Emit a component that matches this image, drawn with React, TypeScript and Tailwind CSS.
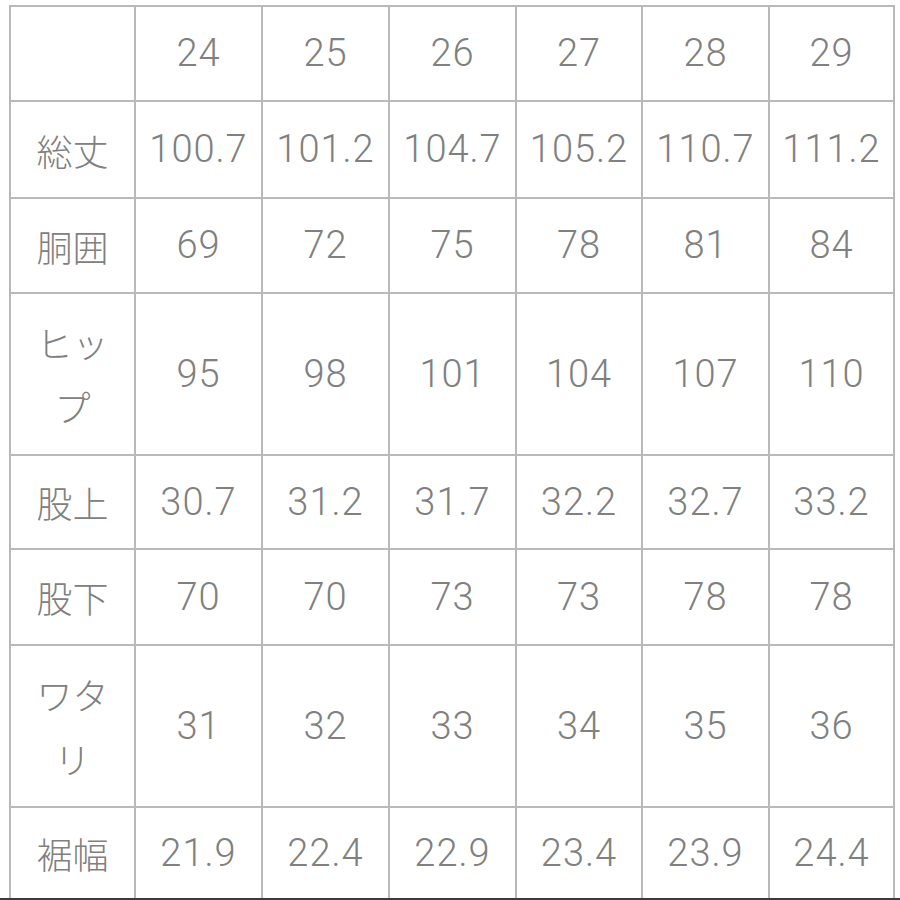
const sizes = ["24", "25", "26", "27", "28", "29"];

const rows: { label: React.ReactNode; values: string[] }[] = [
  { label: "総丈", values: ["100.7", "101.2", "104.7", "105.2", "110.7", "111.2"] },
  { label: "胴囲", values: ["69", "72", "75", "78", "81", "84"] },
  {
    label: (
      <>
        ヒッ
        <br />プ
      </>
    ),
    values: ["95", "98", "101", "104", "107", "110"],
  },
  { label: "股上", values: ["30.7", "31.2", "31.7", "32.2", "32.7", "33.2"] },
  { label: "股下", values: ["70", "70", "73", "73", "78", "78"] },
  {
    label: (
      <>
        ワタ
        <br />リ
      </>
    ),
    values: ["31", "32", "33", "34", "35", "36"],
  },
  { label: "裾幅", values: ["21.9", "22.4", "22.9", "23.4", "23.9", "24.4"] },
];

const num =
  "flex items-center justify-center bg-white text-[38px] font-light tracking-[1px] text-[#808080] font-['Roboto','Liberation_Sans','Noto_Sans_CJK_JP',sans-serif]";
const jp =
  "flex items-center justify-center bg-white text-center text-[36px] font-light leading-[64px] text-[#808080] font-['Noto_Sans_CJK_JP',sans-serif]";

export default function App() {
  return (
    <div className="relative h-[900px] w-[900px] overflow-hidden bg-white">
      <div className="ml-[9px] mt-[5px] grid w-[886px] grid-cols-[123px_125px_125px_125px_124px_125px_123px] grid-rows-[93px_95px_93px_160px_92px_94px_160px_90px] gap-[2px] bg-[#b9b9b9] px-[2px] pt-[2px]">
        <div className="bg-white" />
        {sizes.map((s) => (
          <div key={s} className={num}>
            {s}
          </div>
        ))}
        {rows.map((r, i) => (
          <>
            <div key={`l${i}`} className={jp}>
              <span>{r.label}</span>
            </div>
            {r.values.map((v, j) => (
              <div key={`v${i}-${j}`} className={num}>
                {v}
              </div>
            ))}
          </>
        ))}
      </div>
      <div className="h-[2px] w-full bg-[#3c3c3c]" />
    </div>
  );
}
